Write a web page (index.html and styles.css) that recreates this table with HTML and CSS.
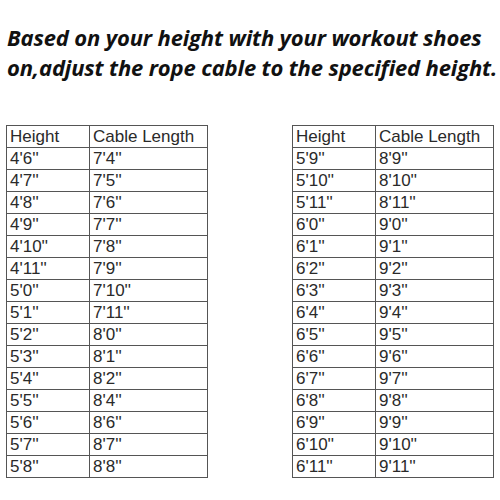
FILE: index.html
```html
<!DOCTYPE html>
<html>
<head>
<meta charset="utf-8">
<link rel="stylesheet" href="styles.css">
</head>
<body>
<div class="page">
  <h1 class="title">Based on your height with your workout shoes<br>on,adjust the rope cable to the specified height.</h1>
  <div class="tables">
    <table class="chart">
      <tr><td class="c1">Height</td><td>Cable Length</td></tr>
      <tr><td class="c1">4'6''</td><td>7'4''</td></tr>
      <tr><td class="c1">4'7''</td><td>7'5''</td></tr>
      <tr><td class="c1">4'8''</td><td>7'6''</td></tr>
      <tr><td class="c1">4'9''</td><td>7'7''</td></tr>
      <tr><td class="c1">4'10''</td><td>7'8''</td></tr>
      <tr><td class="c1">4'11''</td><td>7'9''</td></tr>
      <tr><td class="c1">5'0''</td><td>7'10''</td></tr>
      <tr><td class="c1">5'1''</td><td>7'11''</td></tr>
      <tr><td class="c1">5'2''</td><td>8'0''</td></tr>
      <tr><td class="c1">5'3''</td><td>8'1''</td></tr>
      <tr><td class="c1">5'4''</td><td>8'2''</td></tr>
      <tr><td class="c1">5'5''</td><td>8'4''</td></tr>
      <tr><td class="c1">5'6''</td><td>8'6''</td></tr>
      <tr><td class="c1">5'7''</td><td>8'7''</td></tr>
      <tr><td class="c1">5'8''</td><td>8'8''</td></tr>
    </table>
    <table class="chart">
      <tr><td class="c1">Height</td><td>Cable Length</td></tr>
      <tr><td class="c1">5'9''</td><td>8'9''</td></tr>
      <tr><td class="c1">5'10''</td><td>8'10''</td></tr>
      <tr><td class="c1">5'11''</td><td>8'11''</td></tr>
      <tr><td class="c1">6'0''</td><td>9'0''</td></tr>
      <tr><td class="c1">6'1''</td><td>9'1''</td></tr>
      <tr><td class="c1">6'2''</td><td>9'2''</td></tr>
      <tr><td class="c1">6'3''</td><td>9'3''</td></tr>
      <tr><td class="c1">6'4''</td><td>9'4''</td></tr>
      <tr><td class="c1">6'5''</td><td>9'5''</td></tr>
      <tr><td class="c1">6'6''</td><td>9'6''</td></tr>
      <tr><td class="c1">6'7''</td><td>9'7''</td></tr>
      <tr><td class="c1">6'8''</td><td>9'8''</td></tr>
      <tr><td class="c1">6'9''</td><td>9'9''</td></tr>
      <tr><td class="c1">6'10''</td><td>9'10''</td></tr>
      <tr><td class="c1">6'11''</td><td>9'11''</td></tr>
    </table>
  </div>
</div>
</body>
</html>
```
FILE: styles.css
```css
html, body {
  margin: 0;
  padding: 0;
  background: #fff;
}
.page {
  width: 500px;
  height: 500px;
  overflow: hidden;
}
.title {
  margin: 0;
  padding: 21.5px 0 0 7px;
  font-family: "Open Sans", sans-serif;
  font-weight: 700;
  font-style: italic;
  font-size: 22px;
  line-height: 30px;
  color: #111;
  letter-spacing: -0.15px;
  white-space: nowrap;
}
.title-gap {
  display: none;
}
.tables {
  display: flex;
  gap: 84px;
  padding: 0 0 0 6px;
  margin-top: 43.5px;
}
.chart {
  border-collapse: collapse;
  width: 202px;
  table-layout: fixed;
  font-family: "Liberation Sans", Arial, sans-serif;
  font-size: 17px;
  color: #2a2a2a;
}
.chart td {
  border: 1px solid #555;
  height: 21px;
  padding: 0 0 0 3px;
  line-height: 21px;
  white-space: nowrap;
}
.chart td.c1 {
  width: 79px;
}
```
